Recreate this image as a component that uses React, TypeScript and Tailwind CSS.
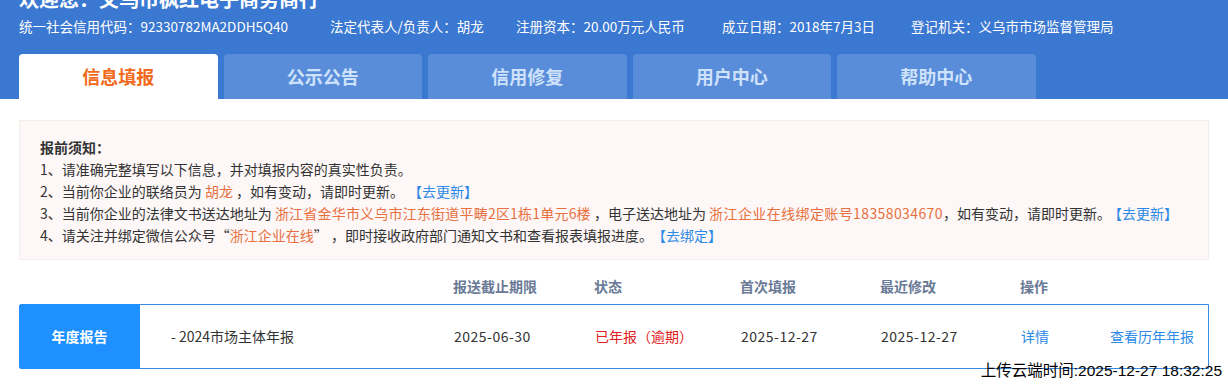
import React from 'react';

const font = { fontFamily: '"Noto Sans CJK SC", "Noto Sans", sans-serif' };

const infoItems = [
  { label: '统一社会信用代码', value: '92330782MA2DDH5Q40', w: 'w-[311px]' },
  { label: '法定代表人/负责人', value: '胡龙', w: 'w-[186px]' },
  { label: '注册资本', value: '20.00万元人民币', w: 'w-[206px]' },
  { label: '成立日期', value: '2018年7月3日', w: 'w-[189px]' },
  { label: '登记机关', value: '义乌市市场监督管理局', w: '' },
];

const tabs = ['信息填报', '公示公告', '信用修复', '用户中心', '帮助中心'];

const cols =
  'grid grid-cols-[120px_314px_141px_146px_140px_140px_89px_1fr] items-center';

export default function App() {
  return (
    <div className="relative h-[385px] w-[1228px] overflow-hidden bg-white text-[#333]" style={font}>
      {/* header */}
      <div className="bg-[#3b78d1] px-[19px]">
        <p className="-mt-[15px] text-[20px] font-bold leading-[28px] text-white">
          欢迎您：义乌市枫红电子商务商行
        </p>
        <div className="flex text-[13.5px] leading-[26px] text-white">
          {infoItems.map((it) => (
            <span key={it.label} className={`shrink-0 ${it.w}`}>
              {it.label}：{it.value}
            </span>
          ))}
        </div>
        <div className="mt-[15px] flex gap-[6px]">
          {tabs.map((t, i) => (
            <div
              key={t}
              className={`flex h-[45px] w-[198.5px] items-center justify-center rounded-t-[4px] text-[18px] font-bold ${
                i === 0 ? 'bg-white text-[#f26a1b]' : 'bg-[#5a8dd9] text-[#cfe2fb]'
              }`}
            >
              {t}
            </div>
          ))}
        </div>
      </div>

      {/* notice */}
      <div className="mx-[19px] mt-[21px] h-[140px] border border-[#f5ecec] bg-[#fdf7f7] px-[20px] pt-[15px] text-[14px] leading-[22px]">
        <p className="font-bold">报前须知：</p>
        <p>1、请准确完整填写以下信息，并对填报内容的真实性负责。</p>
        <p>
          2、当前你企业的联络员为 <span className="text-[#e8703f]">胡龙</span> ，如有变动，请即时更新。
          <span className="ml-[11px] text-[#2d8ae6]">【去更新】</span>
        </p>
        <p>
          3、当前你企业的法律文书送达地址为{' '}
          <span className="text-[#e8703f] tracking-[0.2px]">浙江省金华市义乌市江东街道平畴2区1栋1单元6楼</span> ，电子送达地址为{' '}
          <span className="text-[#e8703f] tracking-[0.4px]">浙江企业在线绑定账号18358034670</span>，如有变动，请即时更新。
          <span className="ml-[4px] text-[#2d8ae6]">【去更新】</span>
        </p>
        <p>
          4、请关注并绑定微信公众号“<span className="text-[#e8703f]">浙江企业在线</span>” ，即时接收政府部门通知文书和查看报表填报进度。
          <span className="ml-[6px] text-[#2d8ae6]">【去绑定】</span>
        </p>
      </div>

      {/* table */}
      <div className="mx-[19px] mt-[8px]">
        <div className={`${cols} h-[36px] text-[14px] font-bold text-[#6a7a96]`}>
          <span />
          <span />
          <span>报送截止期限</span>
          <span>状态</span>
          <span>首次填报</span>
          <span>最近修改</span>
          <span>操作</span>
          <span />
        </div>
        <div className={`${cols} h-[65px] rounded-l-[3px] border border-[#3a8ae0] text-[14px]`}>
          <div className="-my-px -ml-px flex h-[65px] items-center justify-center rounded-l-[3px] bg-[#1e90ff] text-[14px] font-bold text-white">
            年度报告
          </div>
          <span className="pl-[31px]">- 2024市场主体年报</span>
          <span className="tracking-[0.5px]">2025-06-30</span>
          <span className="text-[#e02020]">已年报（逾期）</span>
          <span className="tracking-[0.5px]">2025-12-27</span>
          <span className="tracking-[0.5px]">2025-12-27</span>
          <span className="text-[#2d8ae6]">详情</span>
          <span className="text-[#2d8ae6]">查看历年年报</span>
        </div>
      </div>

      <span
        className="absolute right-[6px] top-[360px] text-[15.5px] leading-[22px] text-black"
        style={{ fontFamily: '"Liberation Sans", "Noto Sans CJK SC", sans-serif' }}
      >
        上传云端时间:2025-12-27 18:32:25
      </span>
    </div>
  );
}
